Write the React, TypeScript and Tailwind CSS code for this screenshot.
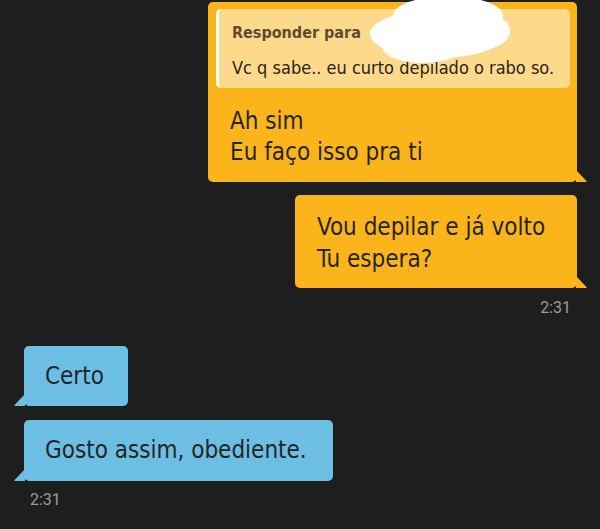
import React from "react";

const font = { fontFamily: '"DejaVu Sans Condensed", "DejaVu Sans", sans-serif' };

function RightTail({ color }: { color: string }) {
  return (
    <svg className="absolute bottom-0 right-[-10px]" width="11" height="12" viewBox="0 0 11 12">
      <path d="M0 0 L0 12 L10.5 12 Q11 11.5 10 10.5 Z" fill={color} />
    </svg>
  );
}
function LeftTail({ color }: { color: string }) {
  return (
    <svg className="absolute bottom-0 left-[-10px]" width="11" height="12" viewBox="0 0 11 12">
      <path d="M11 0 L11 12 L0.5 12 Q0 11.5 1 10.5 Z" fill={color} />
    </svg>
  );
}

export default function App() {
  return (
    <div className="relative w-[600px] h-[529px] overflow-hidden bg-[#1e1e1e] text-[#252525]" style={font}>
      <div className="flex flex-col pt-[2px]">
        <div className="flex justify-end pr-[23px]">
          <div className="relative w-[369px] rounded-[5px] bg-[#fbb41a] pl-[8px] pt-[7px] pb-[14px] pr-[7px]">
            <div className="h-[79px] rounded-[5px] border-l-[3px] border-white bg-[#fdd98c] pl-[13px] pt-[14px]">
              <div className="text-[16px] leading-[20px] font-semibold text-[#5b4b33]">Responder para</div>
              <div className="mt-[15px] text-[18px] leading-[20px] text-[#2a241b]">Vc q sabe.. eu curto depilado o rabo so.</div>
            </div>
            <div className="pl-[14px] pt-[18px] text-[24px] leading-[31px]">
              <div>Ah sim</div>
              <div>Eu faço isso pra ti</div>
            </div>
            <RightTail color="#fbb41a" />
          </div>
        </div>
        <div className="mt-[13px] flex justify-end pr-[23px]">
          <div className="relative w-[282px] rounded-[5px] bg-[#fbb41a] pl-[22px] pt-[16px] pb-[13px] text-[24px] leading-[32px]">
            <div>Vou depilar e já volto</div>
            <div>Tu espera?</div>
            <RightTail color="#fbb41a" />
          </div>
        </div>
        <div className="mt-[10px] pr-[29px] text-right text-[16px] leading-[20px] text-[#9b9b9b]" style={{ fontFamily: 'Roboto, sans-serif' }}>2:31</div>
        <div className="mt-[28px] flex pl-[24px]">
          <div className="relative w-[104px] rounded-[5px] bg-[#6cbfe3] pl-[21px] pt-[14px] pb-[14px] text-[24px] leading-[32px]">
            <div>Certo</div>
            <LeftTail color="#6cbfe3" />
          </div>
        </div>
        <div className="mt-[14px] flex pl-[24px]">
          <div className="relative w-[309px] rounded-[5px] bg-[#6cbfe3] pl-[21px] pt-[14px] pb-[15px] text-[24px] leading-[32px]">
            <div>Gosto assim, obediente.</div>
            <LeftTail color="#6cbfe3" />
          </div>
        </div>
        <div className="mt-[9px] pl-[30px] text-[16px] leading-[20px] text-[#9b9b9b]" style={{ fontFamily: 'Roboto, sans-serif' }}>2:31</div>
      </div>
      <svg className="absolute left-[368px] top-[-4px]" width="145" height="70" viewBox="0 0 145 70">
        <g fill="#ffffff">
          <ellipse cx="70" cy="38" rx="68" ry="24" />
          <ellipse cx="80" cy="20" rx="55" ry="20" />
          <ellipse cx="55" cy="52" rx="40" ry="15" />
          <ellipse cx="115" cy="35" rx="27" ry="18" />
        </g>
      </svg>
    </div>
  );
}
